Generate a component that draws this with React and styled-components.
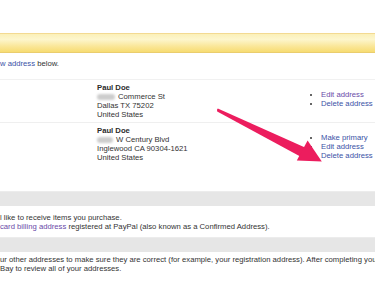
import styled, { createGlobalStyle } from 'styled-components';

const GlobalStyle = createGlobalStyle`
  html, body {
    margin: 0;
    padding: 0;
    background: #ffffff;
    overflow: hidden;
  }
  body {
    font-family: "Liberation Sans", Arial, sans-serif;
    font-size: 7.7px;
    line-height: 9px;
    color: #333333;
  }
`;

const Page = styled.div`
  position: relative;
  width: 375px;
  height: 281px;
  overflow: hidden;
  padding-top: 33px;
  box-sizing: border-box;
`;

const Notice = styled.div`
  height: 18px;
  border-top: 1px solid #f3da92;
  border-bottom: 1px solid #eacd6e;
  background: linear-gradient(#fbf0b8 0%, #fdf6cd 30%, #fae696 70%, #f7dc72 100%);
`;

const Intro = styled.p`
  margin: 6px 0 0;
  white-space: nowrap;
`;

const Link = styled.a`
  color: ${(p) => (p.$visited ? '#6a4aa8' : '#3a52a6')};
  text-decoration: none;
`;

const AddressList = styled.div`
  margin-top: 11px;
  border-top: 1px solid #f1f1f1;
`;

const AddressRow = styled.div`
  display: grid;
  grid-template-columns: 97px 224px 1fr;
  padding: 3px 0 3px;
  border-bottom: 1px solid ${(p) => (p.$last ? 'transparent' : '#efefef')};
`;

const Address = styled.div`
  grid-column: 2;
  white-space: nowrap;
`;

const Name = styled.div`
  font-weight: bold;
  color: #2b2b2b;
`;

const Blur = styled.span`
  display: inline-block;
  width: ${(p) => p.$w}px;
  height: 6px;
  margin-right: 3px;
  border-radius: 3px;
  background: #cdcdcd;
  filter: blur(1.2px);
  vertical-align: -1px;
`;

const Actions = styled.ul`
  grid-column: 3;
  margin: 7px 0 0;
  padding: 0;
  list-style: disc;
  white-space: nowrap;

  li::marker {
    color: #333;
  }
`;

const Band = styled.div`
  height: 15px;
  margin-top: ${(p) => p.$top}px;
  background: #e6e6e6;
  border-top: 1px solid #ececec;
  box-sizing: border-box;
`;

const Para = styled.p`
  margin: ${(p) => p.$top}px 0 0;
  white-space: nowrap;
`;

const Arrow = styled.svg`
  position: absolute;
  left: 0;
  top: 0;
  pointer-events: none;
`;

export default function App() {
  return (
    <>
      <GlobalStyle />
      <Page>
        <Notice />
        <Intro>
          <Link href="#">w address</Link> below.
        </Intro>

        <AddressList>
          <AddressRow>
            <Address>
              <Name>Paul Doe</Name>
              <div>
                <Blur $w={18} />
                Commerce St
              </div>
              <div>Dallas TX 75202</div>
              <div>United States</div>
            </Address>
            <Actions>
              <li>
                <Link href="#" $visited>
                  Edit address
                </Link>
              </li>
              <li>
                <Link href="#">Delete address</Link>
              </li>
            </Actions>
          </AddressRow>
          <AddressRow $last>
            <Address>
              <Name>Paul Doe</Name>
              <div>
                <Blur $w={16} />
                W Century Blvd
              </div>
              <div>Inglewood CA 90304-1621</div>
              <div>United States</div>
            </Address>
            <Actions>
              <li>
                <Link href="#">Make primary</Link>
              </li>
              <li>
                <Link href="#">Edit address</Link>
              </li>
              <li>
                <Link href="#">Delete address</Link>
              </li>
            </Actions>
          </AddressRow>
        </AddressList>

        <Band $top={25} />
        <Para $top={7}>l like to receive items you purchase.</Para>
        <Para $top={0}>
          <Link href="#" $visited>
            card billing address
          </Link>{' '}
          registered at PayPal (also known as a Confirmed Address).
        </Para>
        <Band $top={6} />
        <Para $top={3}>
          ur other addresses to make sure they are correct (for example, your registration
          address). After completing your
        </Para>
        <Para $top={0}>Bay to review all of your addresses.</Para>

        <Arrow width="375" height="281" viewBox="0 0 375 281">
          <path
            d="M217.8 108.4 L305.6 147.8 L301.2 157 L217.2 111.4 Q216.4 109.6 217.8 108.4 Z"
            fill="#ec1d5e"
          />
          <path d="M296.8 160.6 L321.8 161.4 L307.6 140.6 Z" fill="#ec1d5e" />
        </Arrow>
      </Page>
    </>
  );
}
